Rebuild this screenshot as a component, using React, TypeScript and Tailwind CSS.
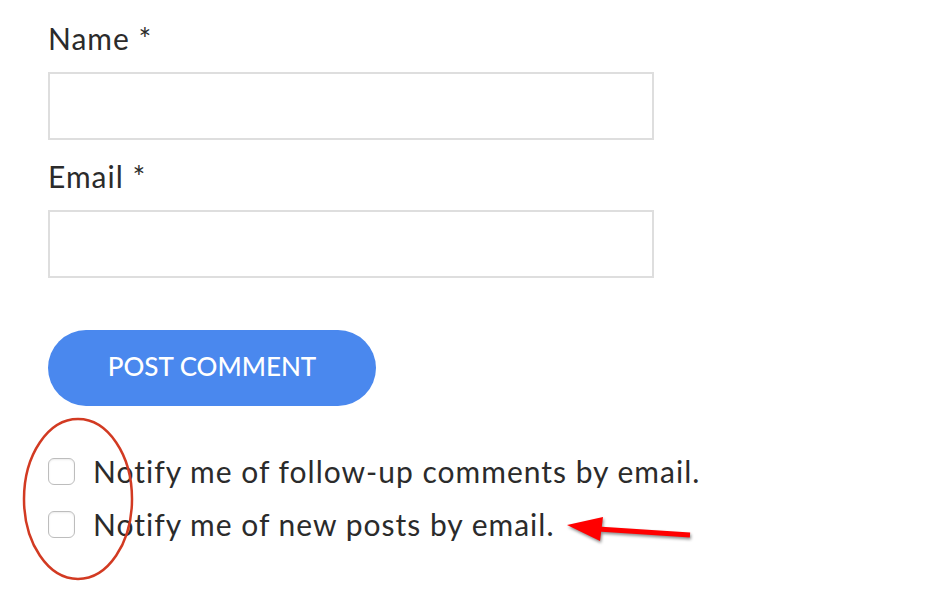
export default function App() {
  return (
    <div className="relative min-h-[594px] w-[939px] bg-white font-['Lato',sans-serif] text-[#2b2b2b]">
      <div className="flex flex-col pl-12 pt-[20px]">
        <label className="text-[30px] leading-[36px] tracking-[1px]">Name *</label>
        <input className="mt-[16px] h-[68px] w-[606px] border-2 border-[#dedede] bg-white outline-none" />
        <label className="mt-[18px] text-[30px] leading-[36px] tracking-[1px]">Email *</label>
        <input className="mt-[16px] h-[68px] w-[606px] border-2 border-[#dedede] bg-white outline-none" />
        <button className="mt-[52px] flex h-[76px] w-[328px] items-center justify-center rounded-full bg-[#4a88ee] pb-[3px] text-[26px] font-medium text-white">
          POST COMMENT
        </button>
        <div className="mt-[51px] flex flex-col gap-[25px]">
          <label className="flex items-center gap-[18px] text-[30px] leading-[28px] tracking-[1px]">
            <span className="h-[27px] w-[27px] rounded-[6px] border border-[#bdbdbd] bg-white shadow-[inset_0_1px_2px_rgba(0,0,0,0.08)]" />
            Notify me of follow-up comments by email.
          </label>
          <label className="flex items-center gap-[18px] text-[30px] leading-[28px] tracking-[1px]">
            <span className="h-[27px] w-[27px] rounded-[6px] border border-[#bdbdbd] bg-white shadow-[inset_0_1px_2px_rgba(0,0,0,0.08)]" />
            Notify me of new posts by email.
          </label>
        </div>
      </div>
      <svg className="pointer-events-none absolute left-0 top-0" width="939" height="594">
        <ellipse cx="78" cy="499" rx="54" ry="80" fill="none" stroke="#d23a22" strokeWidth="2.5" />
        <g style={{ filter: 'drop-shadow(1px 2px 1.5px rgba(0,0,0,0.45))' }}>
          <line x1="690" y1="535" x2="598" y2="529" stroke="#ff0000" strokeWidth="5" />
          <polygon points="567,525 603,517 600,541" fill="#ff0000" />
        </g>
      </svg>
    </div>
  );
}
